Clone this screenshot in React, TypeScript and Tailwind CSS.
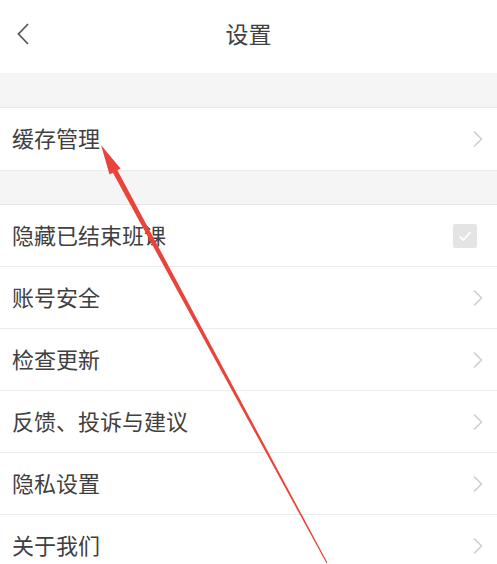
import React from 'react';

const font = { fontFamily: '"Noto Sans CJK SC", "Noto Sans", sans-serif' };

const Chevron = () => (
  <svg width="12" height="18" viewBox="0 0 12 18" className="mr-[13px]">
    <path d="M2 1.5 L9.5 9 L2 16.5" fill="none" stroke="#cfcfcf" strokeWidth="1.6" />
  </svg>
);

const Check = () => (
  <div className="w-6 h-6 mr-5 rounded-[2px] bg-[#e4e4e4] flex items-center justify-center">
    <svg width="18" height="18" viewBox="0 0 18 18">
      <path d="M3.5 9.5 L7.5 13 L14.5 5" fill="none" stroke="#ffffff" strokeWidth="1.8" />
    </svg>
  </div>
);

const Row = ({ label, right = 'chevron', tall }: { label: string; right?: 'chevron' | 'check'; tall?: boolean }) => (
  <div className={`${tall ? 'h-[63px]' : 'h-[62px]'} flex items-center justify-between bg-white border-b border-[#ebebeb]`}>
    <span className="pl-3 mb-1 text-[22px] text-[#404040] leading-none">{label}</span>
    {right === 'check' ? <Check /> : <Chevron />}
  </div>
);

export default function App() {
  return (
    <div className="relative w-[497px] h-[564px] overflow-hidden bg-white" style={font}>
      {/* 顶部导航 */}
      <div className="h-[73px] flex items-center relative bg-white">
        <svg width="16" height="24" viewBox="0 0 16 24" className="ml-[15px] mb-[6px]">
          <path d="M13 2 L3.5 12 L13 22" fill="none" stroke="#555555" strokeWidth="1.7" />
        </svg>
        <span className="absolute left-0 right-0 text-center text-[23px] text-[#404040] mb-[6px] pointer-events-none">设置</span>
      </div>

      <div className="h-[35px] bg-[#f5f5f5] border-b border-[#e8e8e8]" />
      <Row label="缓存管理" tall />
      <div className="h-[34px] bg-[#f5f5f5] border-b border-[#e8e8e8]" />
      <Row label="隐藏已结束班课" right="check" />
      <Row label="账号安全" />
      <Row label="检查更新" />
      <Row label="反馈、投诉与建议" />
      <Row label="隐私设置" />
      <Row label="关于我们" />

      {/* 标注箭头 */}
      <svg className="absolute inset-0 pointer-events-none" width="497" height="564" viewBox="0 0 497 564">
        <polygon
          points="101,145 120.5,168.5 117.4,170.3 327.5,562.7 326.5,563.3 112.9,172.8 109.5,174.6"
          fill="#e8443b"
        />
      </svg>
    </div>
  );
}
